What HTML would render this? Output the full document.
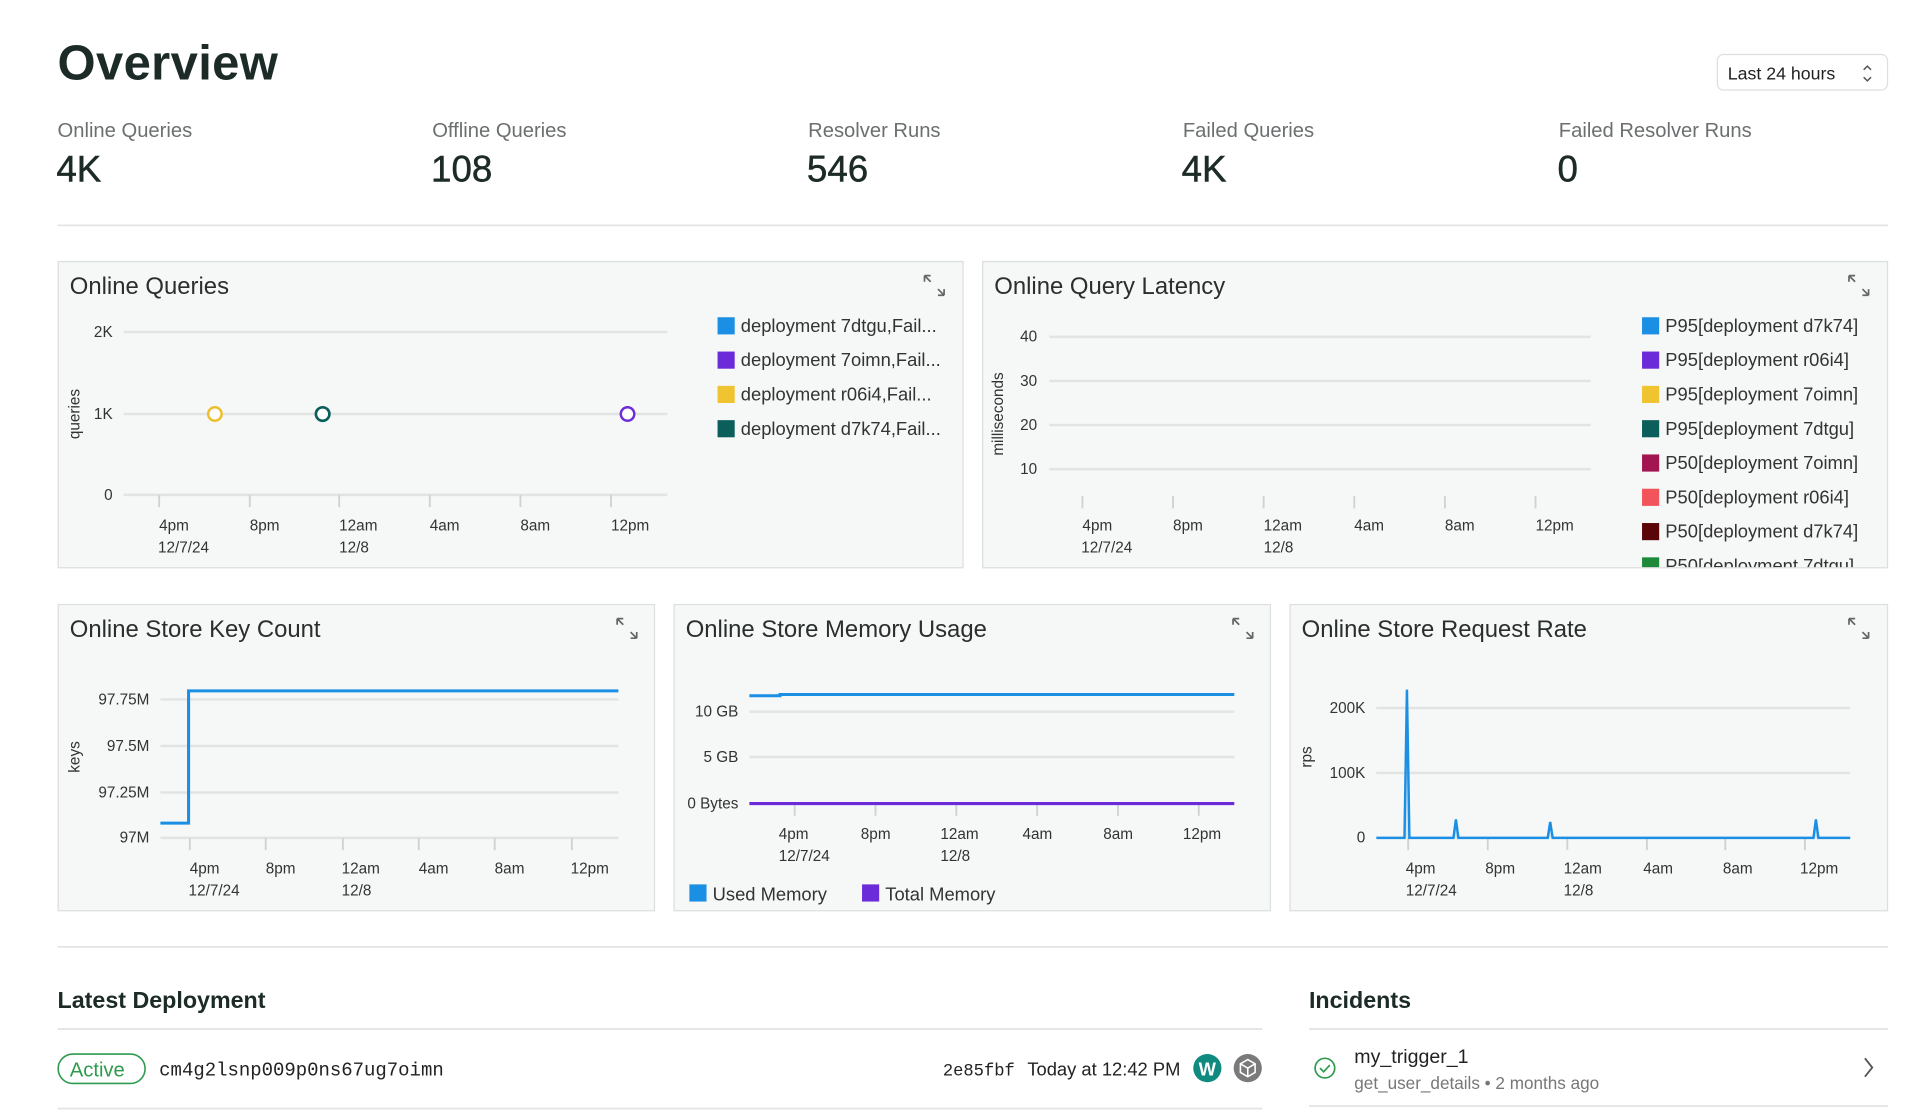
<!DOCTYPE html>
<html><head><meta charset="utf-8"><style>
html,body{margin:0;padding:0;background:#fff;overflow:hidden}
svg{display:block}
text{font-family:"Liberation Sans",sans-serif}
.t{fill:#1c2b27}.l{fill:#6b6f70}.a{fill:#333;font-size:12.5px}
.g{stroke:#e2e4e4;stroke-width:2}.tk{stroke:#cfd2d2;stroke-width:1.5}
.card{fill:#f6f7f7;stroke:#dcdfdf;stroke-width:1}
.lg{font-size:15px;fill:#333}
.mono{font-family:"Liberation Mono",monospace}
</style></head><body>
<svg width="1920" height="1111" viewBox="0 0 1568 907" preserveAspectRatio="none">
<text x="47" y="65" class="t" font-size="40" font-weight="bold" letter-spacing="0.3">Overview</text>
<rect x="1402.5" y="44.5" width="139" height="29" rx="5" fill="#fff" stroke="#dde0e0"/>
<text x="1411" y="65" font-size="14.5" fill="#222">Last 24 hours</text>
<path d="M1522 57l3-3 3 3M1522 63l3 3 3-3" stroke="#555" fill="none" stroke-width="1.2"/>
<g font-size="16.5" class="l"><text x="47" y="112">Online Queries</text><text x="353" y="112">Offline Queries</text><text x="660" y="112">Resolver Runs</text><text x="966" y="112">Failed Queries</text><text x="1273" y="112">Failed Resolver Runs</text></g>
<g font-size="30" class="t" stroke="#1c2b27" stroke-width="0.4"><text x="46" y="148">4K</text><text x="352" y="148">108</text><text x="659" y="148">546</text><text x="965" y="148">4K</text><text x="1272" y="148">0</text></g>
<line x1="47" y1="184" x2="1542" y2="184" stroke="#e3e5e5" stroke-width="1.5"/>
<rect class="card" x="47.5" y="213.5" width="739" height="250"/>
<rect class="card" x="802.5" y="213.5" width="739" height="250"/>
<rect class="card" x="47.5" y="493.5" width="487" height="250"/>
<rect class="card" x="550.5" y="493.5" width="487" height="250"/>
<rect class="card" x="1053.5" y="493.5" width="488" height="250"/>
<g font-size="19.5" fill="#2a2f2e"><text x="57" y="240">Online Queries</text><text x="812" y="240">Online Query Latency</text><text x="57" y="520">Online Store Key Count</text><text x="560" y="520">Online Store Memory Usage</text><text x="1063" y="520">Online Store Request Rate</text></g>
<g stroke="#666" stroke-width="1.4" fill="none">
<path id="ex" d="M755 225l5 5M755 225v5M755 225h5M771 241l-5-5M771 241v-5M771 241h-5"/>
<use href="#ex" x="755"/><use href="#ex" x="-251" y="280"/><use href="#ex" x="252" y="280"/><use href="#ex" x="755" y="280"/>
</g>
<g class="g"><line x1="101" y1="271" x2="545" y2="271"/><line x1="101" y1="338" x2="545" y2="338"/><line x1="101" y1="404" x2="545" y2="404"/></g>
<g class="tk"><path d="M130 404v10M204 404v10M277 404v10M351 404v10M425 404v10M499 404v10"/></g>
<g class="a" text-anchor="end"><text x="92" y="275">2K</text><text x="92" y="342">1K</text><text x="92" y="408">0</text></g>
<text class="a" transform="translate(65,338) rotate(-90)" text-anchor="middle" font-size="11.5">queries</text>
<g class="a"><text x="130" y="433">4pm</text><text x="204" y="433">8pm</text><text x="277" y="433">12am</text><text x="351" y="433">4am</text><text x="425" y="433">8am</text><text x="499" y="433">12pm</text><text x="129" y="451">12/7/24</text><text x="277" y="451">12/8</text></g>
<circle cx="175.5" cy="338" r="5.5" fill="#fff" stroke="#ecbf2a" stroke-width="2"/>
<circle cx="263.5" cy="338" r="5.5" fill="#fff" stroke="#0b5e5a" stroke-width="2.2"/>
<circle cx="512.5" cy="338" r="5.5" fill="#fff" stroke="#6c2bd9" stroke-width="2"/>
<rect x="586" y="259" width="14" height="14" fill="#1a8fe3"/><rect x="586" y="287" width="14" height="14" fill="#6c2bd9"/><rect x="586" y="315" width="14" height="14" fill="#f0c330"/><rect x="586" y="343" width="14" height="14" fill="#0b5e5a"/>
<g class="lg"><text x="605" y="271">deployment 7dtgu,Fail...</text><text x="605" y="299">deployment 7oimn,Fail...</text><text x="605" y="327">deployment r06i4,Fail...</text><text x="605" y="355">deployment d7k74,Fail...</text></g>
<g class="g"><line x1="857" y1="275" x2="1299" y2="275"/><line x1="857" y1="311" x2="1299" y2="311"/><line x1="857" y1="347" x2="1299" y2="347"/><line x1="857" y1="383" x2="1299" y2="383"/></g>
<g class="tk"><path d="M884 405v10M958 405v10M1032 405v10M1106 405v10M1180 405v10M1254 405v10"/></g>
<g class="a" text-anchor="end"><text x="847" y="279">40</text><text x="847" y="315">30</text><text x="847" y="351">20</text><text x="847" y="387">10</text></g>
<text class="a" transform="translate(819,338) rotate(-90)" text-anchor="middle" font-size="11.5">milliseconds</text>
<g class="a"><text x="884" y="433">4pm</text><text x="958" y="433">8pm</text><text x="1032" y="433">12am</text><text x="1106" y="433">4am</text><text x="1180" y="433">8am</text><text x="1254" y="433">12pm</text><text x="883" y="451">12/7/24</text><text x="1032" y="451">12/8</text></g>
<clipPath id="c2"><rect x="802" y="213" width="740" height="250"/></clipPath>
<g clip-path="url(#c2)">
<rect x="1341" y="259" width="14" height="14" fill="#1a8fe3"/><rect x="1341" y="287" width="14" height="14" fill="#6c2bd9"/><rect x="1341" y="315" width="14" height="14" fill="#f0c330"/><rect x="1341" y="343" width="14" height="14" fill="#0b5e5a"/><rect x="1341" y="371" width="14" height="14" fill="#a3154f"/><rect x="1341" y="399" width="14" height="14" fill="#f2545b"/><rect x="1341" y="427" width="14" height="14" fill="#5a0508"/><rect x="1341" y="455" width="14" height="14" fill="#1d8a3a"/>
<g class="lg"><text x="1360" y="271">P95[deployment d7k74]</text><text x="1360" y="299">P95[deployment r06i4]</text><text x="1360" y="327">P95[deployment 7oimn]</text><text x="1360" y="355">P95[deployment 7dtgu]</text><text x="1360" y="383">P50[deployment 7oimn]</text><text x="1360" y="411">P50[deployment r06i4]</text><text x="1360" y="439">P50[deployment d7k74]</text><text x="1360" y="467">P50[deployment 7dtgu]</text></g>
</g>
<g class="g"><line x1="131" y1="571" x2="505" y2="571"/><line x1="131" y1="609" x2="505" y2="609"/><line x1="131" y1="647" x2="505" y2="647"/><line x1="131" y1="684" x2="505" y2="684"/></g>
<g class="tk"><path d="M155 684v10M217 684v10M280 684v10M342 684v10M404 684v10M467 684v10"/></g>
<g class="a" text-anchor="end"><text x="122" y="575">97.75M</text><text x="122" y="613">97.5M</text><text x="122" y="651">97.25M</text><text x="122" y="688">97M</text></g>
<text class="a" transform="translate(65,618) rotate(-90)" text-anchor="middle" font-size="11.5">keys</text>
<path d="M131 672H154V564H505" fill="none" stroke="#1a8fe3" stroke-width="2.5"/>
<g class="a"><text x="155" y="713">4pm</text><text x="217" y="713">8pm</text><text x="279" y="713">12am</text><text x="342" y="713">4am</text><text x="404" y="713">8am</text><text x="466" y="713">12pm</text><text x="154" y="731">12/7/24</text><text x="279" y="731">12/8</text></g>
<g class="g"><line x1="612" y1="581" x2="1008" y2="581"/><line x1="612" y1="618" x2="1008" y2="618"/></g>
<g class="tk"><path d="M649 656v10M715 656v10M781 656v10M847 656v10M913 656v10M979 656v10"/></g>
<g class="a" text-anchor="end"><text x="603" y="585">10 GB</text><text x="603" y="622">5 GB</text><text x="603" y="660">0 Bytes</text></g>
<path d="M612 568H637V567H1008" fill="none" stroke="#1a8fe3" stroke-width="2.5"/>
<line x1="612" y1="656" x2="1008" y2="656" stroke="#6c2bd9" stroke-width="2.5"/>
<g class="a"><text x="636" y="685">4pm</text><text x="703" y="685">8pm</text><text x="768" y="685">12am</text><text x="835" y="685">4am</text><text x="901" y="685">8am</text><text x="966" y="685">12pm</text><text x="636" y="703">12/7/24</text><text x="768" y="703">12/8</text></g>
<rect x="563" y="722" width="14" height="14" fill="#1a8fe3"/><rect x="704" y="722" width="14" height="14" fill="#6c2bd9"/>
<g class="lg"><text x="582" y="735">Used Memory</text><text x="723" y="735">Total Memory</text></g>
<g class="g"><line x1="1124" y1="578" x2="1511" y2="578"/><line x1="1124" y1="631" x2="1511" y2="631"/></g>
<g class="tk"><path d="M1150 684v10M1215 684v10M1280 684v10M1345 684v10M1409 684v10M1474 684v10"/></g>
<g class="a" text-anchor="end"><text x="1115" y="582">200K</text><text x="1115" y="635">100K</text><text x="1115" y="688">0</text></g>
<text class="a" transform="translate(1071,618) rotate(-90)" text-anchor="middle" font-size="11.5">rps</text>
<path d="M1124 684H1147L1149 563L1151 684H1187L1189 669L1191 684H1264L1266 671L1268 684H1481L1483 669L1485 684H1511" fill="#1a8fe3" fill-opacity="0.15" stroke="#1a8fe3" stroke-width="2"/>
<g class="a"><text x="1148" y="713">4pm</text><text x="1213" y="713">8pm</text><text x="1277" y="713">12am</text><text x="1342" y="713">4am</text><text x="1407" y="713">8am</text><text x="1470" y="713">12pm</text><text x="1148" y="731">12/7/24</text><text x="1277" y="731">12/8</text></g>
<line x1="47" y1="773" x2="1542" y2="773" stroke="#e3e5e5" stroke-width="1.5"/>
<text x="47" y="823" font-size="19" font-weight="bold" class="t">Latest Deployment</text>
<text x="1069" y="823" font-size="19" font-weight="bold" class="t">Incidents</text>
<line x1="47" y1="840" x2="1031" y2="840" stroke="#e3e5e5" stroke-width="1.5"/>
<line x1="1069" y1="840" x2="1542" y2="840" stroke="#e3e5e5" stroke-width="1.5"/>
<line x1="47" y1="905" x2="1031" y2="905" stroke="#e3e5e5" stroke-width="1.5"/>
<line x1="1069" y1="903" x2="1542" y2="903" stroke="#e3e5e5" stroke-width="1.5"/>
<rect x="47.5" y="860.5" width="71" height="24" rx="12" fill="#fff" stroke="#2e9b4f" stroke-width="1.3"/>
<text x="57" y="879" font-size="16.5" fill="#2e9b4f">Active</text>
<text x="130" y="878" font-size="15.5" class="mono" fill="#222">cm4g2lsnp009p0ns67ug7oimn</text>
<text x="770" y="878" font-size="14" class="mono" fill="#222">2e85fbf</text>
<text x="839" y="878" font-size="15" fill="#222">Today at 12:42 PM</text>
<circle cx="986" cy="872" r="11.5" fill="#0f8a7e"/>
<text x="986" y="878" font-size="15" fill="#fff" text-anchor="middle" font-weight="bold">W</text>
<circle cx="1019" cy="872" r="11.5" fill="#7a7a7a"/>
<path d="M1019 865l6 3.5v7l-6 3.5-6-3.5v-7zM1013 868.5l6 3.5 6-3.5M1019 872v7" fill="none" stroke="#fff" stroke-width="1.3"/>
<circle cx="1082" cy="872" r="8" fill="none" stroke="#2e9b4f" stroke-width="1.4"/>
<path d="M1078 872l3 3 5-5.5" fill="none" stroke="#2e9b4f" stroke-width="1.4"/>
<text x="1106" y="868" font-size="16" fill="#222">my_trigger_1</text>
<text x="1106" y="889" font-size="14" fill="#777">get_user_details • 2 months ago</text>
<path d="M1523 864l6 7.5-6 7.5" fill="none" stroke="#555" stroke-width="1.5"/>
</svg>
</body></html>
